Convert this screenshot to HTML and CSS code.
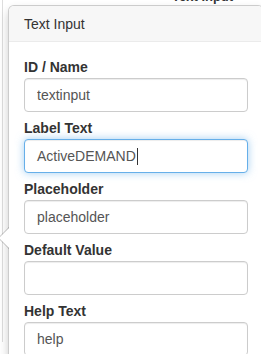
FILE: index.html
```html
<!DOCTYPE html>
<html lang="en">
<head>
    <meta charset="UTF-8">
    <meta name="viewport" content="width=device-width, initial-scale=1.0">
    <link rel="stylesheet" href="styles.css">
    <title>Text Input</title>
</head>
<body>
    <div class="page">
        <h4 class="page-title">Text Input</h4>
    </div>

    <div class="popover">
        <div class="arrow"></div>
        <h3 class="popover-title">Text Input</h3>
        <div class="popover-content">
            <div class="form-group">
                <label for="id-name">ID / Name</label>
                <input class="form-control" id="id-name" type="text" value="textinput">
            </div>
            <div class="form-group">
                <label>Label Text</label>
                <div class="form-control form-control--focus">ActiveDEMAND<span class="caret"></span></div>
            </div>
            <div class="form-group">
                <label for="placeholder">Placeholder</label>
                <input class="form-control" id="placeholder" type="text" value="placeholder">
            </div>
            <div class="form-group">
                <label for="default-value">Default Value</label>
                <input class="form-control" id="default-value" type="text" value="">
            </div>
            <div class="form-group">
                <label for="help-text">Help Text</label>
                <input class="form-control" id="help-text" type="text" value="help">
            </div>
        </div>
    </div>
</body>
</html>
```

FILE: styles.css
```css
* {
    box-sizing: border-box;
}

html, body {
    height: 100%;
}

body {
    margin: 0;
    overflow: hidden;
    font-family: "Liberation Sans", Arial, sans-serif;
    font-size: 14px;
    line-height: 20px;
    color: #333;
    background-color: #fff;
}

.page {
    height: 100%;
    margin-left: 2px;
    border-left: 1px solid #ddd;
}

.page-title {
    margin: -12px 0 0 169px;
    font-size: 13px;
    line-height: 18px;
    font-weight: bold;
    color: #333;
}

.popover {
    position: absolute;
    top: 5px;
    left: 8px;
    width: 256px;
    background-color: #fff;
    border: 1px solid rgba(0,0,0,0.2);
    border-radius: 6px;
    box-shadow: 0 5px 10px rgba(0,0,0,0.2);
}

.arrow,
.arrow::after {
    position: absolute;
    display: block;
    width: 0;
    height: 0;
    border-style: solid;
    border-color: transparent;
}

.arrow {
    top: 221px;
    left: -11px;
    border-width: 11px 11px 11px 0;
    border-right-color: rgba(0,0,0,0.25);
}

.arrow::after {
    content: "";
    top: -10px;
    left: 1px;
    border-width: 10px 10px 10px 0;
    border-right-color: #fff;
}

.popover-title {
    margin: 0;
    padding: 8px 15px 7px;
    font-size: 14px;
    line-height: 20px;
    font-weight: normal;
    background-color: #f7f7f7;
    border-bottom: 1px solid #ebebeb;
    border-radius: 5px 5px 0 0;
}

.popover-content {
    padding: 15px 15px 0;
}

.form-group {
    margin-bottom: 6px;
}

.form-group label {
    display: block;
    margin-bottom: 1px;
    font-weight: bold;
}

.form-control {
    display: block;
    width: 100%;
    height: 34px;
    margin: 0;
    padding: 6px 12px;
    font-family: inherit;
    font-size: 14px;
    line-height: 20px;
    color: #555;
    background-color: #fff;
    border: 1px solid #ccc;
    border-radius: 4px;
    box-shadow: inset 0 1px 1px rgba(0,0,0,0.075);
    outline: none;
}

.form-control--focus {
    border-color: #66afe9;
    box-shadow: inset 0 1px 1px rgba(0,0,0,0.075), 0 0 8px rgba(102,175,233,0.6);
}

.caret {
    display: inline-block;
    width: 1px;
    height: 17px;
    margin-left: 1px;
    vertical-align: -4px;
    background-color: #333;
}
```
